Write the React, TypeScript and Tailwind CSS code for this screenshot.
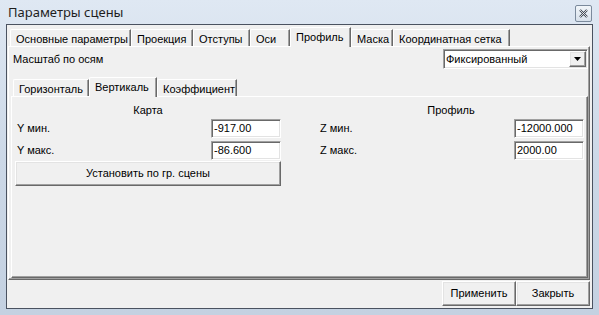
const outerTabs = [
  { label: 'Основные параметры', w: 'w-[121px]' },
  { label: 'Проекция', w: 'w-[62px]' },
  { label: 'Отступы', w: 'w-[57px]' },
  { label: 'Оси', w: 'w-[40px]' },
  { label: 'Профиль', w: 'w-[61px]', active: true },
  { label: 'Маска', w: 'w-[42px]' },
  { label: 'Координатная сетка', w: 'w-[117px]' },
];

const innerTabs = [
  { label: 'Горизонталь', w: 'w-[76px]' },
  { label: 'Вертикаль', w: 'w-[68px]', active: true },
  { label: 'Коэффициент', w: 'w-[80px]' },
];

function Tab({ label, w, active }: { label: string; w: string; active?: boolean }) {
  if (active) {
    return (
      <div
        className={`${w} relative z-10 -mb-px h-[20px] shrink-0 rounded-tl-[2px] border-l border-t border-r border-l-white border-t-white border-r-[#696969] bg-[#f0f0f0] pl-[5px] pt-[2px] leading-[14px] shadow-[inset_-1px_0_0_#a0a0a0]`}
      >
        {label}
      </div>
    );
  }
  return (
    <div
      className={`${w} h-[17px] shrink-0 rounded-tl-[2px] border-l border-t border-r border-l-white border-t-white border-r-[#696969] pl-[5px] pt-[2px] leading-[14px] shadow-[inset_-1px_0_0_#a0a0a0]`}
    >
      {label}
    </div>
  );
}

function Field({ label, value }: { label: string; value: string }) {
  return (
    <div className="flex h-[19px] items-center justify-between">
      <span className="pl-[2px]">{label}</span>
      <div className="flex h-[19px] w-[70px] items-center border border-t-[#a0a0a0] border-l-[#a0a0a0] border-r-white border-b-white bg-white pl-[2px] shadow-[inset_1px_1px_0_#696969,inset_-1px_-1px_0_#e3e3e3]">
        {value}
      </div>
    </div>
  );
}

function RaisedButton({ children, className }: { children: React.ReactNode; className: string }) {
  return (
    <div
      className={`${className} flex items-center justify-center border border-t-white border-l-white border-r-[#696969] border-b-[#696969] bg-[#f0f0f0] shadow-[inset_-1px_-1px_0_#a0a0a0,inset_1px_1px_0_#e3e3e3]`}
    >
      {children}
    </div>
  );
}

export default function App() {
  return (
    <div className="flex h-[315px] w-[599px] flex-col bg-gradient-to-b from-[#dfe8f3] via-[#ccd8e7] to-[#c4d1e1] font-['Liberation_Sans',Arial,sans-serif] text-[11px] text-black">
      {/* title bar */}
      <div className="flex h-[24px] shrink-0 items-center justify-between pl-[8px] pr-[7px]">
        <span className="font-['Noto_Sans',sans-serif] text-[13px] leading-none text-[#1e1e1e]">Параметры сцены</span>
        <div className="mt-[2px] flex h-[17px] w-[17px] items-center justify-center rounded-[2px] border border-[#7b8a9c] bg-gradient-to-b from-[#f2f6fa] to-[#d7e0ea]">
          <svg width="9" height="9" viewBox="0 0 9 9">
            <path d="M1 1 L8 8 M8 1 L1 8" stroke="#3c4450" strokeWidth="2.2" />
            <path d="M1 1 L8 8 M8 1 L1 8" stroke="#ffffff" strokeWidth="0.8" />
          </svg>
        </div>
      </div>

      {/* client area */}
      <div className="mx-[6px] mb-[6px] flex flex-1 flex-col border border-[#4a5260] bg-[#f0f0f0] pt-[2px]">
        <div className="ml-[3px] flex h-[19px] items-end">
          {outerTabs.map((t) => (
            <Tab key={t.label} label={t.label} w={t.w} active={t.active} />
          ))}
        </div>

        <div className="ml-[1px] mr-[2px] flex h-[234px] flex-col border border-t-white border-l-white border-r-[#696969] border-b-[#696969] shadow-[inset_-1px_-1px_0_#a0a0a0]">
          <div className="flex items-center justify-between pl-[4px] pr-[1px] pt-[2px]">
            <span>Масштаб по осям</span>
            <div className="flex h-[20px] w-[145px] items-center justify-between border border-t-[#a0a0a0] border-l-[#a0a0a0] border-r-white border-b-white bg-white pl-[2px] pr-[1px] shadow-[inset_1px_1px_0_#696969,inset_-1px_-1px_0_#e3e3e3]">
              <span>Фиксированный</span>
              <RaisedButton className="h-[16px] w-[17px]">
                <svg width="7" height="4" viewBox="0 0 7 4">
                  <path d="M0 0 H7 L3.5 4 Z" fill="#000" />
                </svg>
              </RaisedButton>
            </div>
          </div>

          <div className="ml-[2px] mt-[7px] flex h-[20px] items-end pl-[2px]">
            {innerTabs.map((t) => (
              <Tab key={t.label} label={t.label} w={t.w} active={t.active} />
            ))}
          </div>

          <div className="mb-[1px] ml-[2px] mr-[1px] flex flex-1 justify-between border border-t-white border-l-white border-r-[#696969] border-b-[#696969] px-[3px] shadow-[inset_-1px_-1px_0_#a0a0a0]">
            <div className="flex w-[266px] flex-col">
              <div className="h-[22px] pt-[7px] text-center leading-[13px]">Карта</div>
              <div className="flex flex-col gap-[3px]">
                <Field label="Y мин." value="-917.00" />
                <Field label="Y макс." value="-86.600" />
              </div>
              <RaisedButton className="mt-[1px] h-[25px] w-[266px]">Установить по гр. сцены</RaisedButton>
            </div>
            <div className="flex w-[266px] flex-col">
              <div className="h-[22px] pt-[7px] text-center leading-[13px]">Профиль</div>
              <div className="flex flex-col gap-[3px]">
                <Field label="Z мин." value="-12000.000" />
                <Field label="Z макс." value="2000.00" />
              </div>
            </div>
          </div>
        </div>

        <div className="mr-[2px] mt-[1px] flex justify-end">
          <RaisedButton className="h-[25px] w-[74px]">Применить</RaisedButton>
          <RaisedButton className="h-[25px] w-[74px]">Закрыть</RaisedButton>
        </div>
      </div>
    </div>
  );
}
